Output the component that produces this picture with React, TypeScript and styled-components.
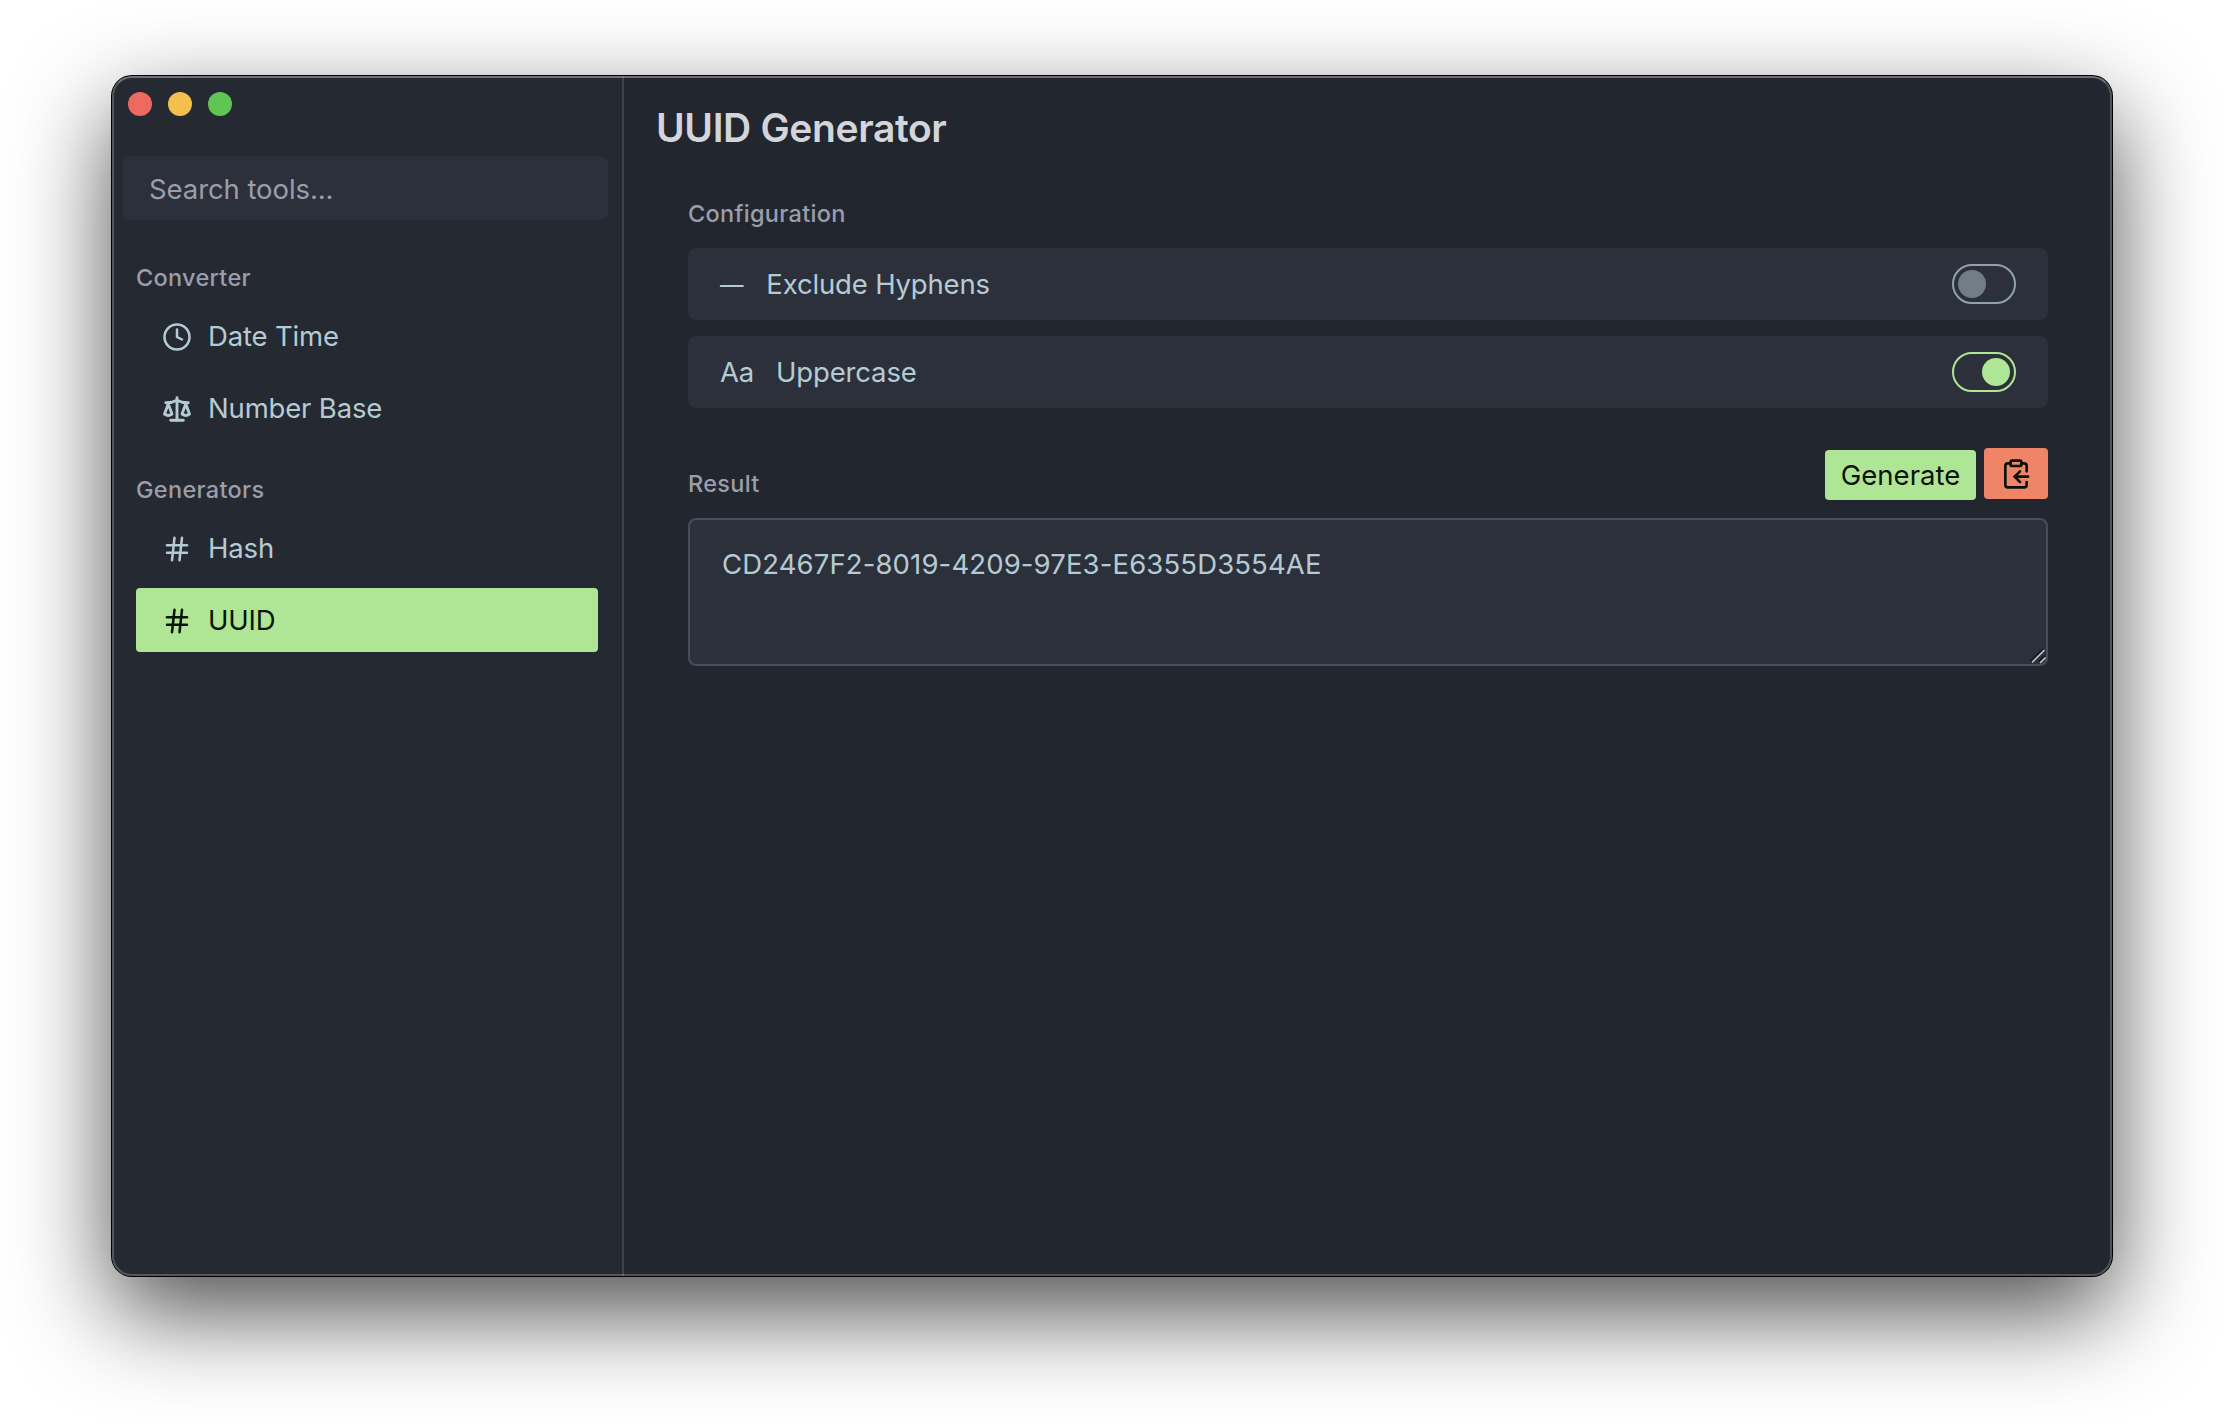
import React, { useState } from "react";
import styled, { createGlobalStyle } from "styled-components";
import { Clock, Scale, Hash, ClipboardCopy } from "lucide-react";

const color = {
  sidebar: "#252932",
  main: "#22262e",
  field: "#2c303b",
  text: "#b5cbd4",
  muted: "#9b9eaa",
  title: "#d3d5da",
  primary: "#afe695",
  secondary: "#ef8466",
  onAccent: "#0b1309",
};

const GlobalStyle = createGlobalStyle`
  * { box-sizing: border-box; }
  body {
    margin: 0;
    background: #fff;
    font-family: Inter, "Liberation Sans", sans-serif;
    font-size: 27.5px;
    letter-spacing: -0.17px;
    color: ${color.text};
  }
  button, input, textarea {
    font: inherit;
    letter-spacing: inherit;
    color: inherit;
    border: 0;
    outline: 0;
  }
`;

const Desktop = styled.div`
  width: 2224px;
  height: 1424px;
  padding: 76px 112px 148px;
  overflow: hidden;
`;

const Window = styled.div`
  position: relative;
  display: flex;
  width: 2000px;
  height: 1200px;
  border-radius: 20px;
  background: ${color.main};
  box-shadow: 0 0 0 1px #000, 0 36px 96px rgba(0, 0, 0, 0.7);

  &::after {
    content: "";
    position: absolute;
    inset: 0;
    border: 2px solid rgba(255, 255, 255, 0.21);
    border-top-color: rgba(255, 255, 255, 0.34);
    border-radius: 20px;
    pointer-events: none;
  }
`;

const Sidebar = styled.aside`
  width: 512px;
  padding: 16px 14px 0 11px;
  background: ${color.sidebar};
  border-right: 2px solid #42424a;
  border-radius: 20px 0 0 20px;
`;

const Lights = styled.div`
  display: flex;
  gap: 16px;
  padding-left: 5px;
`;

const Light = styled.span<{ $fill: string }>`
  width: 24px;
  height: 24px;
  border-radius: 50%;
  background: ${(p) => p.$fill};
`;

const Search = styled.input`
  display: block;
  width: 485px;
  height: 64px;
  margin-top: 40px;
  padding: 1px 26px 0;
  border-radius: 8px;
  background: ${color.field};
  letter-spacing: -0.08px;

  &::placeholder { color: ${color.muted}; opacity: 1; }
`;

const Menu = styled.nav`
  padding: 36px 9px 0 13px;
`;

const Group = styled.section`
  margin-bottom: 28px;
`;

const Label = styled.h2`
  margin: 0;
  height: 48px;
  line-height: 44px;
  font-size: 23.5px;
  font-weight: 500;
  letter-spacing: 0.3px;
  color: ${color.muted};
`;

const MenuItem = styled.button<{ $active: boolean }>`
  display: flex;
  align-items: center;
  gap: 16px;
  width: 462px;
  height: 64px;
  margin-bottom: 8px;
  padding: 0 24px 0 26px;
  border-radius: 4px;
  text-align: left;
  background: ${(p) => (p.$active ? color.primary : "transparent")};
  color: ${(p) => (p.$active ? color.onAccent : color.text)};

  svg { flex: none; margin-top: 2px; }
`;

const Main = styled.main`
  flex: 1;
  padding: 28px 64px 0 32px;
`;

const Title = styled.h1`
  margin: 0;
  height: 48px;
  line-height: 48px;
  font-size: 39px;
  font-weight: 600;
  letter-spacing: -0.36px;
  color: ${color.title};
`;

const Content = styled.div`
  padding: 40px 0 0 32px;
`;

const Options = styled.div`
  display: grid;
  gap: 16px;
  margin-top: 8px;
`;

const Option = styled.label`
  display: flex;
  align-items: center;
  height: 72px;
  padding: 0 32px;
  border-radius: 8px;
  background: ${color.field};
`;

const Glyph = styled.span`
  margin-right: 22px;
`;

const DashGlyph = styled(Glyph)`
  margin-right: 23px;
  font-size: 23.5px;
`;

const Toggle = styled.button<{ $on: boolean }>`
  display: flex;
  justify-content: ${(p) => (p.$on ? "flex-end" : "flex-start")};
  width: 64px;
  height: 40px;
  margin-left: auto;
  padding: 4px;
  border: 2px solid ${(p) => (p.$on ? color.primary : "#91a2ab")};
  border-radius: 20px;
  background: transparent;
`;

const Knob = styled.span<{ $on: boolean }>`
  width: 28px;
  height: 28px;
  border-radius: 50%;
  background: ${(p) => (p.$on ? color.primary : "#727e86")};
`;

const ResultHeader = styled.div`
  display: flex;
  align-items: flex-start;
  height: 52px;
  margin-top: 40px;
`;

const ResultLabel = styled(Label)`
  padding-top: 14px;
`;

const Actions = styled.div`
  display: flex;
  gap: 8px;
  height: 52px;
  margin-left: auto;
`;

const Generate = styled.button`
  width: 151px;
  height: 50px;
  margin-top: 2px;
  padding: 0;
  border-radius: 4px;
  background: ${color.primary};
  color: ${color.onAccent};
  letter-spacing: 0;
`;

const Copy = styled.button`
  display: grid;
  place-items: center;
  width: 64px;
  height: 51px;
  padding: 0;
  border-radius: 4px;
  background: ${color.secondary};
  color: ${color.onAccent};
`;

const OutputFrame = styled.div`
  position: relative;
  margin-top: 18px;
  height: 148px;
`;

const Output = styled.textarea`
  display: block;
  width: 100%;
  height: 100%;
  padding: 16px 32px;
  border: 2px solid #464e5a;
  border-radius: 8px;
  background: ${color.field};
  line-height: 56px;
  letter-spacing: 0.13px;
  resize: none;
`;

const Grip = styled.svg`
  position: absolute;
  right: 2px;
  bottom: 2px;
`;

const groups = [
  {
    name: "Converter",
    tools: [
      { name: "Date Time", Icon: Clock, stroke: 2 },
      { name: "Number Base", Icon: Scale, stroke: 2.3 },
    ],
  },
  {
    name: "Generators",
    tools: [
      { name: "Hash", Icon: Hash, stroke: 2 },
      { name: "UUID", Icon: Hash, stroke: 2 },
    ],
  },
];

export default function App() {
  const [tool, setTool] = useState("UUID");
  const [noHyphens, setNoHyphens] = useState(false);
  const [upper, setUpper] = useState(true);

  return (
    <>
      <GlobalStyle />
      <Desktop>
        <Window>
          <Sidebar>
            <Lights>
              <Light $fill="#ed6a5f" />
              <Light $fill="#f5bf4f" />
              <Light $fill="#61c554" />
            </Lights>
            <Search placeholder="Search tools..." />
            <Menu>
              {groups.map((group) => (
                <Group key={group.name}>
                  <Label>{group.name}</Label>
                  {group.tools.map(({ name, Icon, stroke }) => (
                    <MenuItem key={name} $active={tool === name} onClick={() => setTool(name)}>
                      <Icon size={30} strokeWidth={stroke} />
                      {name}
                    </MenuItem>
                  ))}
                </Group>
              ))}
            </Menu>
          </Sidebar>
          <Main>
            <Title>UUID Generator</Title>
            <Content>
              <Label>Configuration</Label>
              <Options>
                <Option>
                  <DashGlyph>—</DashGlyph>
                  Exclude Hyphens
                  <Toggle $on={noHyphens} onClick={() => setNoHyphens(!noHyphens)}>
                    <Knob $on={noHyphens} />
                  </Toggle>
                </Option>
                <Option>
                  <Glyph>Aa</Glyph>
                  Uppercase
                  <Toggle $on={upper} onClick={() => setUpper(!upper)}>
                    <Knob $on={upper} />
                  </Toggle>
                </Option>
              </Options>
              <ResultHeader>
                <ResultLabel>Result</ResultLabel>
                <Actions>
                  <Generate>Generate</Generate>
                  <Copy>
                    <ClipboardCopy size={32} />
                  </Copy>
                </Actions>
              </ResultHeader>
              <OutputFrame>
                <Output readOnly value="CD2467F2-8019-4209-97E3-E6355D3554AE" />
                <Grip width="16" height="16" viewBox="0 0 16 16" fill="none">
                  <path d="M0.5 13.5 13 1M8.5 14 14.5 8" stroke="#14161b" strokeWidth="1.6" />
                  <path d="M2 14.5 14.5 2M10 15 15.5 9.500" stroke="#c3c5c8" strokeWidth="1.6" />
                </Grip>
              </OutputFrame>
            </Content>
          </Main>
        </Window>
      </Desktop>
    </>
  );
}
